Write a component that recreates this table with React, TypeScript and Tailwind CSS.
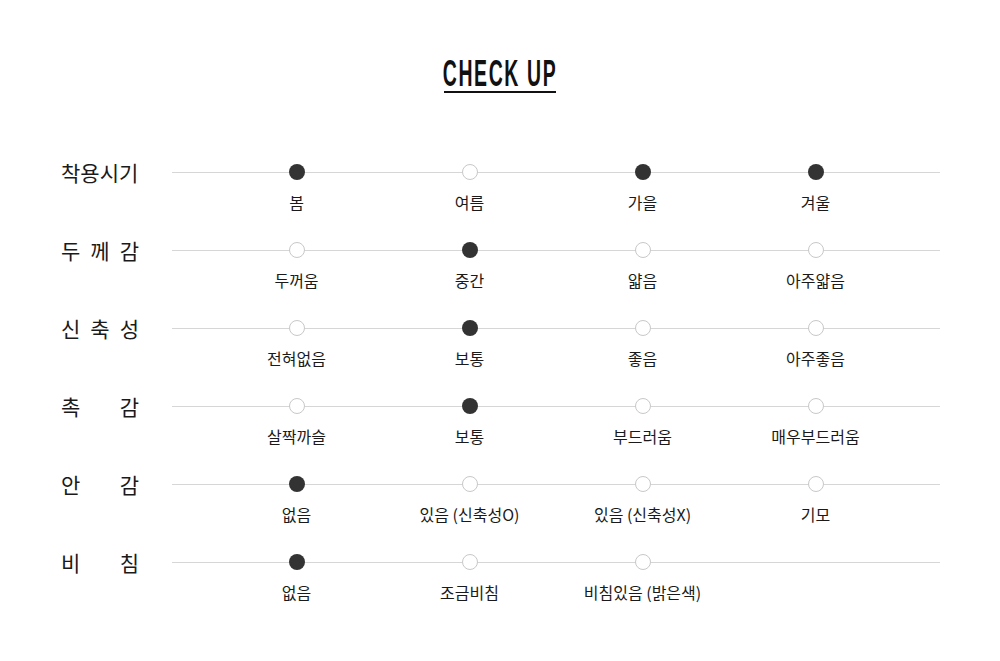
import React from 'react';

type Row = { label: string[]; options: string[]; selected: number[] };

const ROWS: Row[] = [
  { label: ['착용시기'], options: ['봄', '여름', '가을', '겨울'], selected: [0, 2, 3] },
  { label: ['두', '께', '감'], options: ['두꺼움', '중간', '얇음', '아주얇음'], selected: [1] },
  { label: ['신', '축', '성'], options: ['전혀없음', '보통', '좋음', '아주좋음'], selected: [1] },
  { label: ['촉', '감'], options: ['살짝까슬', '보통', '부드러움', '매우부드러움'], selected: [1] },
  { label: ['안', '감'], options: ['없음', '있음 (신축성O)', '있음 (신축성X)', '기모'], selected: [0] },
  { label: ['비', '침'], options: ['없음', '조금비침', '비침있음 (밝은색)'], selected: [0] },
];

const kr = { fontFamily: '"Noto Sans CJK KR", "Noto Sans", sans-serif' };

export default function App() {
  return (
    <div className="w-[1000px] h-[661px] bg-white text-[#222]" style={kr}>
      <div className="flex justify-center pt-[58px]">
        <div className="flex flex-col items-center w-[112px]">
          <h1
            className="text-[36px] leading-[32px] font-bold tracking-[3px] text-[#111] whitespace-nowrap scale-x-[0.54]"
            style={{ fontFamily: '"Liberation Sans", Arial, sans-serif' }}
          >
            CHECK UP
          </h1>
          <div className="w-[112px] h-[2px] bg-[#111] mt-[1px]" />
        </div>
      </div>

      <div className="mt-[79px] pl-[61px] pr-[60px]">
        {ROWS.map((row, i) => (
          <div key={i} className="flex h-[78px]">
            <div className="w-[111px] h-[24px] -mt-[12px] flex items-center">
              <div className={`w-[78px] flex text-[21px] leading-[24px] text-[#1a1a1a] ${row.label.length > 1 ? 'justify-between' : ''}`}>
                {row.label.map((c, j) => (
                  <span key={j}>{c}</span>
                ))}
              </div>
            </div>
            <div className="flex-1 relative">
              <div className="absolute left-0 right-0 top-0 h-px bg-[#d6d6d6]" />
              <div className="grid grid-cols-4 px-[38px]">
                {row.options.map((opt, j) => {
                  const on = row.selected.includes(j);
                  return (
                    <div key={j} className="flex flex-col items-center">
                      <div
                        className={`relative -mt-[8px] w-[16px] h-[16px] rounded-full ${
                          on ? 'bg-[#333]' : 'bg-white border border-[#c8c8c8]'
                        }`}
                      />
                      <div className="mt-[12px] text-[16px] leading-[20px] text-[#1a1a1a] whitespace-nowrap">
                        {opt}
                      </div>
                    </div>
                  );
                })}
              </div>
            </div>
          </div>
        ))}
      </div>
    </div>
  );
}
